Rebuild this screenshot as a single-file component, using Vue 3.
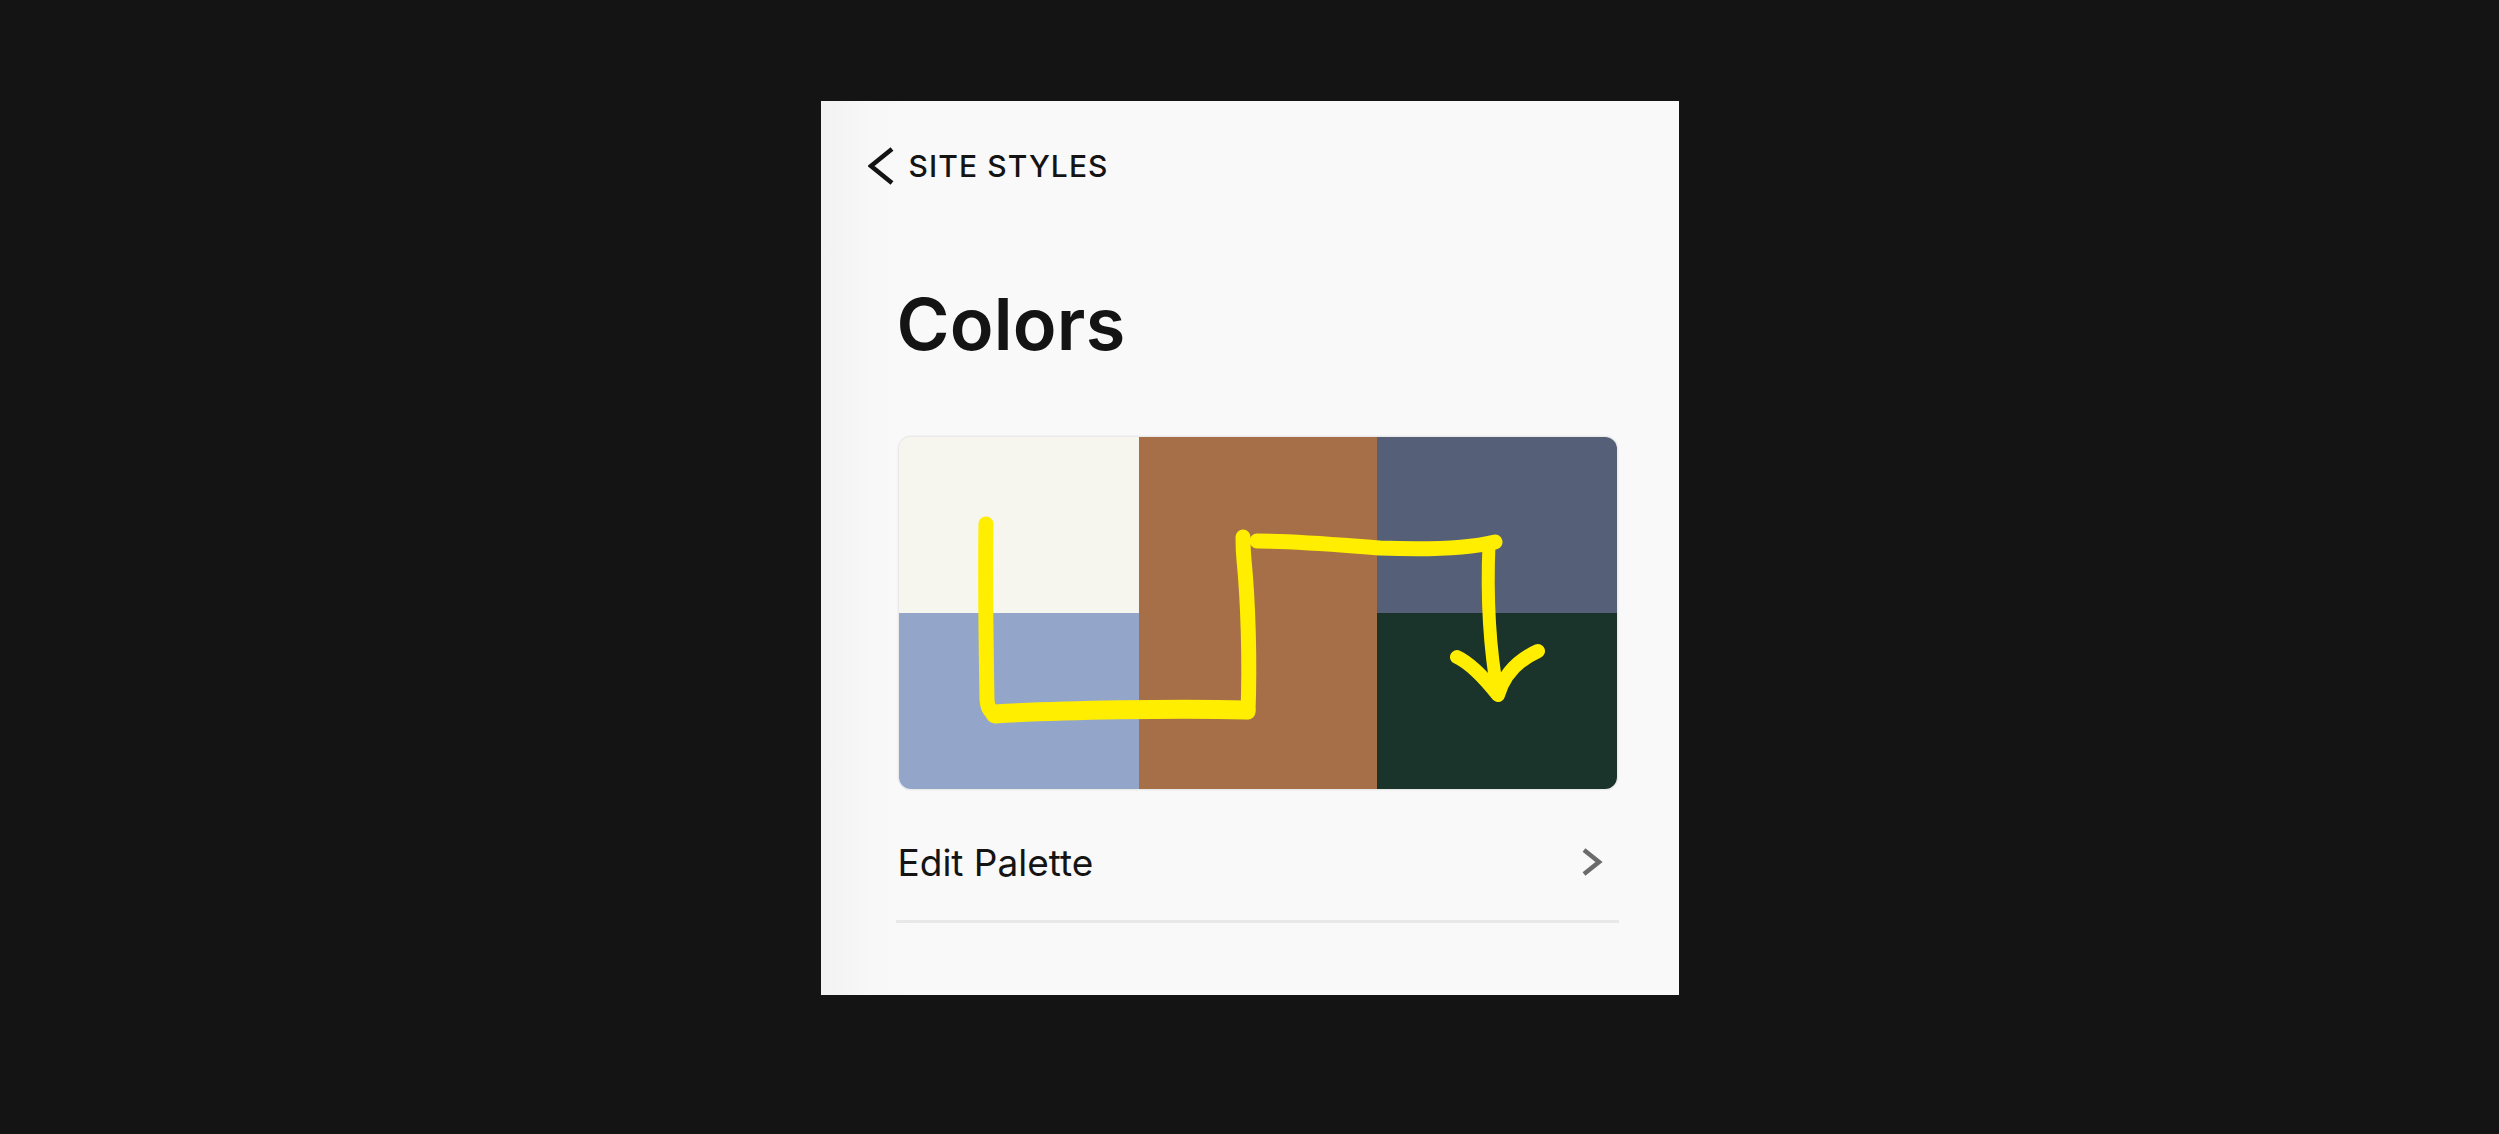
<script setup>
const swatches = [
  { color: '#f6f6ef', tall: false },
  { color: '#a76f47', tall: true },
  { color: '#555f78', tall: false },
  { color: '#93a5c9', tall: false },
  { color: '#1a332b', tall: false },
]
</script>

<template>
  <div class="page">
    <div class="panel">
      <div class="back">
        <svg class="back-icon" width="26" height="38" viewBox="0 0 26 38">
          <path d="M24 2 L3 19 L24 36" fill="none" stroke="#141414" stroke-width="4.5" />
        </svg>
        <span class="back-label">SITE STYLES</span>
      </div>

      <div class="content">
        <h1 class="title">Colors</h1>

        <div class="palette">
          <div class="grid">
            <div
              v-for="(s, idx) in swatches"
              :key="idx"
              class="swatch"
              :class="{ tall: s.tall }"
              :style="{ background: s.color }"
            />
          </div>
          <svg class="scribble" width="718" height="352" viewBox="899 437 718 352">
            <g fill="none" stroke="#ffee00" stroke-linecap="round" stroke-linejoin="round">
              <path stroke-width="15" d="M986 524 C985 580 986 640 987 700 Q988 713 997 714" />
              <path stroke-width="19" d="M995 714 C1060 710 1180 708 1246 710" />
              <path stroke-width="15" d="M1248 712 C1250 660 1248 600 1244 560 C1243 550 1243 545 1243 537" />
              <path stroke-width="15" d="M1257 541 C1300 541 1340 545 1380 548 C1430 550 1470 548 1495 542" />
              <path stroke-width="13" d="M1489 544 C1487 590 1488 640 1498 695" />
              <path stroke-width="14" d="M1457 657 C1472 664 1486 680 1498 695 C1504 675 1518 660 1538 651" />
            </g>
          </svg>
        </div>

        <div class="row">
          <span class="row-label">Edit Palette</span>
          <svg class="row-icon" width="22" height="28" viewBox="0 0 22 28">
            <path d="M3 2 L18 14 L3 26" fill="none" stroke="#6b6b6b" stroke-width="4.5" />
          </svg>
        </div>
      </div>
    </div>
  </div>
</template>

<style scoped>
.page {
  min-height: 1134px;
  box-sizing: border-box;
  padding-top: 101px;
  background: #141414;
  font-family: Inter, "Liberation Sans", sans-serif;
  color: #141414;
}
.panel {
  width: 858px;
  height: 894px;
  margin: 0 auto;
  box-sizing: border-box;
  padding-top: 46px;
  background: linear-gradient(90deg, #f2f2f2 0, #f8f8f8 50px, #f9f9f9 90px);
}
.back {
  display: flex;
  align-items: center;
  gap: 15px;
  padding-left: 47px;
  height: 38px;
}
.back-label {
  font-size: 30px;
  font-weight: 500;
  letter-spacing: 1.1px;
}
.content {
  padding: 0 62px 0 78px;
}
.title {
  margin: 96px 0 0 -2px;
  font-size: 72px;
  line-height: 86px;
  font-weight: 600;
  letter-spacing: 0.2px;
}
.palette {
  position: relative;
  margin-top: 70px;
}
.grid {
  display: grid;
  grid-template-columns: 240px 238px 240px;
  grid-template-rows: 176px 176px;
  border-radius: 12px;
  overflow: hidden;
  box-shadow: 0 0 0 1.5px rgba(0, 0, 0, 0.06);
}
.swatch.tall {
  grid-row: span 2;
}
.scribble {
  position: absolute;
  left: 0;
  top: 0;
}
.row {
  display: flex;
  align-items: center;
  justify-content: space-between;
  height: 134px;
  padding-top: 15px;
  margin-left: -3px;
  width: 723px;
  padding-right: 16px;
  box-sizing: border-box;
  border-bottom: 3px solid #e8e8e8;
}
.row-label {
  margin-left: 2px;
  font-size: 37px;
  font-weight: 400;
}
</style>

<style>
html, body {
  background: #141414;
}
</style>
